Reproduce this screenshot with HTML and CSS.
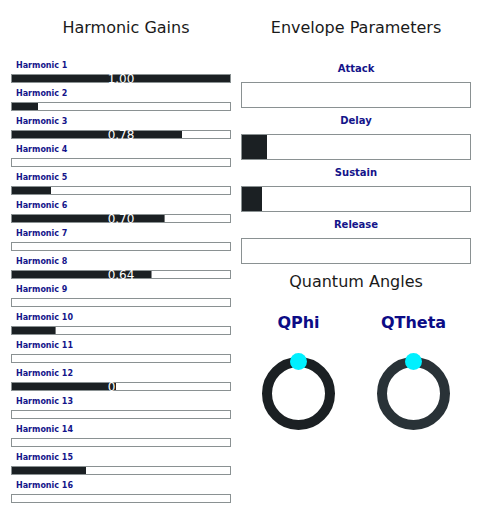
FILE: index.html
```html
<!DOCTYPE html>
<html lang="en">
<head>
    <meta charset="UTF-8">
    <meta name="viewport" content="width=device-width, initial-scale=1.0">
    <title>Harmonic Synth</title>
    <link rel="stylesheet" href="styles.css">
</head>
<body>
    <div class="page">
        <div class="column">
            <h2>Harmonic Gains</h2>
            <div class="harmonics">
                <div class="harmonic"><div class="label">Harmonic 1</div><div class="bar"><div class="fill" style="width: 100%"><span class="value">1.00</span></div></div></div>
                <div class="harmonic"><div class="label">Harmonic 2</div><div class="bar"><div class="fill" style="width: 12%"><span class="value">0.12</span></div></div></div>
                <div class="harmonic"><div class="label">Harmonic 3</div><div class="bar"><div class="fill" style="width: 78%"><span class="value">0.78</span></div></div></div>
                <div class="harmonic"><div class="label">Harmonic 4</div><div class="bar"><div class="fill" style="width: 0%"><span class="value">0.00</span></div></div></div>
                <div class="harmonic"><div class="label">Harmonic 5</div><div class="bar"><div class="fill" style="width: 18%"><span class="value">0.18</span></div></div></div>
                <div class="harmonic"><div class="label">Harmonic 6</div><div class="bar"><div class="fill" style="width: 70%"><span class="value">0.70</span></div></div></div>
                <div class="harmonic"><div class="label">Harmonic 7</div><div class="bar"><div class="fill" style="width: 0%"><span class="value">0.00</span></div></div></div>
                <div class="harmonic"><div class="label">Harmonic 8</div><div class="bar"><div class="fill" style="width: 64%"><span class="value">0.64</span></div></div></div>
                <div class="harmonic"><div class="label">Harmonic 9</div><div class="bar"><div class="fill" style="width: 0%"><span class="value">0.00</span></div></div></div>
                <div class="harmonic"><div class="label">Harmonic 10</div><div class="bar"><div class="fill" style="width: 20%"><span class="value">0.20</span></div></div></div>
                <div class="harmonic"><div class="label">Harmonic 11</div><div class="bar"><div class="fill" style="width: 0%"><span class="value">0.00</span></div></div></div>
                <div class="harmonic"><div class="label">Harmonic 12</div><div class="bar"><div class="fill" style="width: 47.7%"><span class="value">0.48</span></div></div></div>
                <div class="harmonic"><div class="label">Harmonic 13</div><div class="bar"><div class="fill" style="width: 0%"><span class="value">0.00</span></div></div></div>
                <div class="harmonic"><div class="label">Harmonic 14</div><div class="bar"><div class="fill" style="width: 0%"><span class="value">0.00</span></div></div></div>
                <div class="harmonic"><div class="label">Harmonic 15</div><div class="bar"><div class="fill" style="width: 34%"><span class="value">0.34</span></div></div></div>
                <div class="harmonic"><div class="label">Harmonic 16</div><div class="bar"><div class="fill" style="width: 0%"><span class="value">0.00</span></div></div></div>
            </div>
        </div>

        <div class="column">
            <h2>Envelope Parameters</h2>
            <div class="envelope">
                <div class="env-item"><div class="env-label">Attack</div><div class="env-box"><div class="env-fill" style="width: 0%"></div></div></div>
                <div class="env-item"><div class="env-label">Delay</div><div class="env-box"><div class="env-fill" style="width: 11%"></div></div></div>
                <div class="env-item"><div class="env-label">Sustain</div><div class="env-box"><div class="env-fill" style="width: 8.8%"></div></div></div>
                <div class="env-item"><div class="env-label">Release</div><div class="env-box"><div class="env-fill" style="width: 0%"></div></div></div>
            </div>

            <h2 class="angles-title">Quantum Angles</h2>
            <div class="knobs">
                <div class="knob">
                    <div class="knob-label">QPhi</div>
                    <div class="dial dial-phi"><div class="handle"></div></div>
                </div>
                <div class="knob">
                    <div class="knob-label">QTheta</div>
                    <div class="dial dial-theta"><div class="handle"></div></div>
                </div>
            </div>
        </div>
    </div>
</body>
</html>
```

FILE: styles.css
```css
body {
    font-family: "DejaVu Sans", Verdana, sans-serif;
    background-color: #fff;
    margin: 0;
    padding: 0;
}

.page {
    display: grid;
    grid-template-columns: 230px 230px;
    padding: 0 11px;
}

h2 {
    margin: 18px 0 0;
    font-size: 16px;
    font-weight: normal;
    line-height: 20px;
    text-align: center;
    color: #1a1a1a;
}

.harmonics,
.envelope {
    margin-top: 18px;
}

/* harmonic gain bars */
.harmonic {
    width: 220px;
    margin-bottom: 1px;
}

.label {
    padding-left: 5px;
    padding-top: 1px;
    font-size: 8px;
    font-weight: bold;
    line-height: 17px;
    color: #14148a;
}

.bar {
    height: 9px;
    border: 1px solid #8a9192;
    box-sizing: border-box;
    background-color: #fff;
}

.fill {
    height: 100%;
    clip-path: inset(-4px 0 -4px 0);
    background-color: #1b2023;
}

.value {
    display: block;
    width: 218px;
    text-align: center;
    white-space: nowrap;
    font-size: 12px;
    line-height: 9px;
    color: #fff;
}

/* envelope */
.env-label {
    font-size: 10px;
    font-weight: bold;
    line-height: 26px;
    text-align: center;
    color: #14148a;
}

.env-box {
    height: 26px;
    border: 1px solid #8a9192;
    box-sizing: border-box;
}

.env-fill {
    height: 100%;
    background-color: #1b2023;
}

/* quantum angles */
.angles-title {
    margin-top: 8px;
}

.knobs {
    display: grid;
    grid-template-columns: 1fr 1fr;
    margin-top: 21px;
}

.knob {
    display: flex;
    flex-direction: column;
    align-items: center;
}

.knob-label {
    font-size: 16px;
    font-weight: bold;
    line-height: 20px;
    color: #0c0c86;
}

.dial {
    position: relative;
    width: 73px;
    height: 73px;
    margin-top: 24px;
    border: 10px solid #1b2023;
    border-radius: 50%;
    box-sizing: border-box;
}

.dial-theta {
    border-color: #293237;
}

.handle {
    position: absolute;
    top: -14px;
    left: 50%;
    width: 17px;
    height: 17px;
    margin-left: -8.5px;
    border-radius: 50%;
    background-color: #00f0ff;
}
```
